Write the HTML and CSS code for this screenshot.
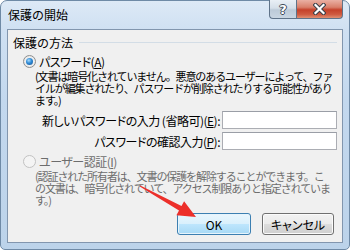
FILE: index.html
```html
<!DOCTYPE html>
<html lang="ja">

<head>
  <meta charset="UTF-8" />
  <title>保護の開始</title>
  <link rel="stylesheet" href="styles.css">
</head>

<body>
  <div class="window">
    <div class="titlebar">
      <span class="title">保護の開始</span>
      <div class="caption-buttons">
        <span class="cap-btn help">?</span>
        <span class="cap-btn close">
          <svg width="13" height="12" viewBox="0 0 13 12">
            <path d="M2.5 2 L10.5 10 M10.5 2 L2.5 10" stroke="#3a3f48" stroke-width="4.2" stroke-linecap="square" />
            <path d="M2.5 2 L10.5 10 M10.5 2 L2.5 10" stroke="#fff" stroke-width="2.2" stroke-linecap="square" />
          </svg>
        </span>
      </div>
    </div>

    <div class="client">
      <div class="group-head">
        <span>保護の方法</span>
        <span class="rule"></span>
      </div>

      <div class="option">
        <span class="radio checked"></span>
        <span>パスワード(<u>A</u>)</span>
      </div>
      <p class="desc">(文書は暗号化されていません。悪意のあるユーザーによって、ファ<br>イルが編集されたり、パスワードが削除されたりする可能性があり<br>ます。)</p>

      <div class="fields">
        <label>新しいパスワードの入力 (省略可)(<u>E</u>):</label>
        <span class="textbox"></span>
        <label>パスワードの確認入力(<u>P</u>):</label>
        <span class="textbox"></span>
      </div>

      <div class="option disabled">
        <span class="radio"></span>
        <span>ユーザー認証(<u>I</u>)</span>
      </div>
      <p class="desc disabled">(認証された所有者は、文書の保護を解除することができます。こ<br>の文書は、暗号化されていて、アクセス制限ありと指定されていま<br>す。)</p>

      <div class="actions">
        <span class="button default">OK</span>
        <span class="button">キャンセル</span>
      </div>
    </div>

    <svg class="arrow" width="350" height="250" viewBox="0 0 350 250">
      <polygon points="139.8,186.4 179,210.5 176.4,215.3 196,217 184.1,201.3 181.5,206.1 140.2,185.6" fill="#ec2f2a" />
    </svg>
  </div>
</body>

</html>
```

FILE: styles.css
```css
body {
  margin: 0;
  width: 350px;
  height: 250px;
  overflow: hidden;
  font-family: "Noto Sans CJK JP", sans-serif;
  font-size: 12px;
  color: #000;
  background: #fff;
}

.window {
  position: relative;
  box-sizing: border-box;
  width: 350px;
  height: 250px;
  border: 1px solid #6f8aa6;
  border-radius: 7px 7px 5px 5px;
  padding: 0 6px 6px;
  display: flex;
  flex-direction: column;
  background: linear-gradient(180deg, #dde9f6 0%, #cfe0f2 12%, #c3d8ee 40%, #bcd3ea 100%);
}

.titlebar {
  height: 28px;
  display: flex;
  align-items: flex-start;
}

.title {
  padding: 6px 0 0 1px;
  line-height: 16px;
}

.caption-buttons {
  display: flex;
  margin-left: auto;
  margin-top: -1px;
}

.cap-btn {
  box-sizing: border-box;
  height: 19px;
  display: flex;
  align-items: center;
  justify-content: center;
  border: 1px solid #5f7389;
  border-top: none;
}

.help {
  width: 27px;
  border-right: none;
  border-radius: 0 0 0 4px;
  background: linear-gradient(180deg, #e9eff5 0%, #d5dfe9 45%, #bccad8 55%, #c9d6e2 100%);
  color: #fff;
  font-weight: bold;
  font-size: 13px;
  font-family: "DejaVu Sans", sans-serif;
  text-shadow: -1px 0 #3d4a58, 1px 0 #3d4a58, 0 -1px #3d4a58, 0 1px #3d4a58;
}

.close {
  width: 47px;
  border-radius: 0 0 4px 0;
  background: linear-gradient(180deg, #eab0a3 0%, #d9806b 40%, #c5412a 55%, #cf5a40 80%, #e08f72 100%);
}

.client {
  flex: 1;
  border: 1px solid #8296ae;
  background: #f0f0f0;
  display: flex;
  flex-direction: column;
  font-feature-settings: "palt";
  letter-spacing: -0.5px;
}

.group-head {
  display: flex;
  align-items: center;
  gap: 6px;
  height: 14px;
  margin: 5px 5px 0 5px;
  letter-spacing: 0;
  font-feature-settings: normal;
}

.rule {
  flex: 1;
  height: 1px;
  background: #d3dde6;
}

.option {
  display: flex;
  align-items: center;
  gap: 3px;
  height: 14px;
  margin: 5px 0 0 15px;
}

.option + .desc {
  margin-top: 2px;
}

.radio {
  box-sizing: border-box;
  width: 13px;
  height: 13px;
  border-radius: 50%;
  border: 1px solid #8e8f8f;
  background: radial-gradient(circle, #f4f4f4 40%, #dcdcdc 100%);
  display: flex;
  align-items: center;
  justify-content: center;
}

.radio.checked::after {
  content: "";
  width: 7px;
  height: 7px;
  border-radius: 50%;
  background: radial-gradient(circle at 40% 35%, #a9dbfb 0%, #2d8ad6 45%, #1a4f8c 100%);
}

.option.disabled {
  margin-top: 4px;
  color: #6d6d6d;
}

.option.disabled .radio {
  border-color: #c2c2c2;
  background: #f4f4f4;
}

.desc {
  margin: 3px 0 0 27px;
  font-size: 11px;
  line-height: 12px;
  white-space: nowrap;
  font-feature-settings: normal;
  letter-spacing: -1.1px;
}

.desc.disabled {
  color: #6d6d6d;
}

.fields {
  display: grid;
  grid-template-columns: 1fr 115px;
  column-gap: 2px;
  row-gap: 3px;
  align-items: center;
  margin: 5px 5px 0 0;
}

.fields label {
  text-align: right;
}

.textbox {
  box-sizing: border-box;
  height: 18px;
  background: #fff;
  border: 1px solid #abadb3;
  border-top-color: #9a9ea6;
}

.actions {
  display: flex;
  justify-content: flex-end;
  gap: 11px;
  margin: 7px 8px 0 0;
  letter-spacing: 0;
}

.button {
  box-sizing: border-box;
  width: 72px;
  height: 22px;
  display: flex;
  align-items: center;
  justify-content: center;
  border: 1px solid #707070;
  border-radius: 3px;
  box-shadow: inset 0 0 0 1px #fbfbfb;
  background: linear-gradient(180deg, #f2f2f2 0%, #ebebeb 50%, #dddddd 50%, #cfcfcf 100%);
}

.button.default {
  width: 74px;
  border-color: #3c7fb1;
  box-shadow: inset 0 0 0 1px #e6f4fc;
  background: linear-gradient(180deg, #eaf6fd 0%, #d9f0fc 50%, #bee6fd 50%, #a7d9f5 100%);
}

.arrow {
  position: absolute;
  left: -1px;
  top: -1px;
  pointer-events: none;
}
```
